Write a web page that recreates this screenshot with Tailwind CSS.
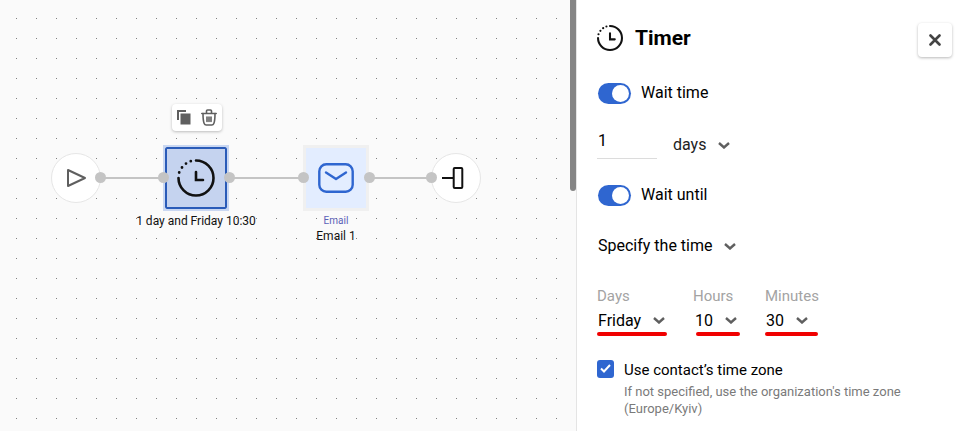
<!DOCTYPE html>
<html lang="en">
<head>
    <meta charset="UTF-8">
    <meta name="viewport" content="width=device-width, initial-scale=1.0">
    <title>Timer</title>
    <script src="https://cdn.jsdelivr.net/npm/@tailwindcss/browser@4"></script>
</head>
<body class="font-['Roboto',sans-serif] bg-white text-black overflow-hidden">
<div class="flex w-[962px] h-[431px]">

    <!-- canvas -->
    <div class="relative w-[570px] h-full shrink-0 bg-[#fafafa] bg-[radial-gradient(circle_at_0.5px_0.5px,#808080_0.5px,transparent_0.6px)] bg-size-[20px_20px] bg-position-[16px_18px]">
        <div class="absolute left-[101px] top-[177px] w-[330px] h-[2px] bg-[#c4c4c4]"></div>

        <!-- start -->
        <div class="absolute left-[51px] top-[153px] w-[50px] h-[50px] rounded-full bg-white border border-[#e6e6e6] flex items-center justify-center">
            <svg width="22" height="22" viewBox="0 0 22 22" fill="none" stroke="#5f5f5f" stroke-width="2" stroke-linejoin="round"><path d="M3 3v16L20 11z"/></svg>
        </div>

        <!-- timer node -->
        <div class="absolute left-[163px] top-[145px] w-[66px] h-[66px] border-2 border-[#c9d7f2] flex items-center justify-center">
            <div class="w-[62px] h-[62px] bg-[#c5d3ef] border-[2px] border-[#2a5bb8] rounded-[2px] flex items-center justify-center">
                <svg width="38" height="38" viewBox="0 0 38 38" fill="none" stroke="#111" stroke-width="2.600" stroke-linecap="round">
                    <path d="M19 1.500A17.500 17.500 0 1 1 1.500 19"/>
                    <path d="M2.200 13.500v.01M5 8.500v.01M9 4.600v.01M13.800 2.200v.01" stroke-width="2.800"/>
                    <path d="M19 13v8h7"/>
                </svg>
            </div>
        </div>

        <!-- email node -->
        <div class="absolute left-[303px] top-[145px] w-[66px] h-[66px] bg-[#e3edff] border-[3px] border-[#f0f0f0] flex items-center justify-center">
            <svg width="36" height="30" viewBox="0 0 36 30" fill="none" stroke="#2f66d0" stroke-width="2.400" stroke-linecap="round" stroke-linejoin="round">
                <rect x="1.300" y="1.300" width="33.400" height="27.400" rx="7"/>
                <path d="M8 9.500l10 6.500 10-6.500"/>
            </svg>
        </div>

        <!-- end -->
        <div class="absolute left-[431px] top-[153px] w-[50px] h-[50px] rounded-full bg-white border border-[#e6e6e6] flex items-center justify-center">
            <svg class="overflow-visible" width="24" height="24" viewBox="0 0 24 24" fill="none" stroke="#111" stroke-width="2" stroke-linejoin="round"><path d="M-2 12H10"/><rect x="9.700" y="2" width="8.600" height="20" rx="1"/></svg>
        </div>

        <!-- ports -->
        <div class="absolute left-[95px] top-[172px] w-[11px] h-[11px] rounded-full bg-[#c4c4c4]"></div>
        <div class="absolute left-[158px] top-[172px] w-[11px] h-[11px] rounded-full bg-[#c4c4c4]"></div>
        <div class="absolute left-[224px] top-[172px] w-[11px] h-[11px] rounded-full bg-[#c4c4c4]"></div>
        <div class="absolute left-[298px] top-[172px] w-[11px] h-[11px] rounded-full bg-[#c4c4c4]"></div>
        <div class="absolute left-[364px] top-[172px] w-[11px] h-[11px] rounded-full bg-[#c4c4c4]"></div>
        <div class="absolute left-[426px] top-[172px] w-[11px] h-[11px] rounded-full bg-[#c4c4c4]"></div>

        <!-- node toolbar -->
        <div class="absolute left-[172px] top-[104px] w-[50px] h-[27px] bg-white rounded-[4px] shadow-[0_1px_3px_rgba(0,0,0,0.25)] flex items-center justify-center gap-[10px]">
            <svg width="14" height="15" viewBox="0 0 14 15"><path d="M0 0h9v2H2v8H0z" fill="#5f5f5f"/><rect x="3.500" y="3.500" width="10" height="11" fill="#5f5f5f"/></svg>
            <svg width="16" height="17" viewBox="0 0 16 17" fill="none" stroke="#5f5f5f" stroke-width="1.600" stroke-linecap="round"><path d="M.8 4.500h14.400M5.500 4V2a1 1 0 0 1 1-1h3a1 1 0 0 1 1 1v2"/><path d="M2 4.500c0 5 .3 8 1.200 10 .3.8 1 1.500 2 1.500h5.600c1 0 1.700-.7 2-1.500.9-2 1.200-5 1.200-10"/><path d="M6 8v4.500M8 8v4.500M10 8v4.500"/></svg>
        </div>

        <!-- labels -->
        <div class="absolute left-[126px] top-[213px] w-[140px] text-center text-[12px] leading-[16px] text-[#111] whitespace-nowrap">1 day and Friday 10:30</div>
        <div class="absolute left-[296px] top-[214px] w-[80px] text-center text-[10px] leading-[13px] text-[#5a62b8]">Email</div>
        <div class="absolute left-[296px] top-[228px] w-[80px] text-center text-[12px] leading-[16px] text-[#111]">Email 1</div>
    </div>

    <!-- scrollbar -->
    <div class="w-[6px] shrink-0 bg-[#fafafa]">
        <div class="h-[191px] bg-[#858585] rounded-b-[3px]"></div>
    </div>

    <!-- side panel -->
    <div class="flex-1 border-l border-[#e4e4e4] pl-[20px] pr-[9px]">
        <div class="flex items-start justify-between h-[57px] pt-[23px] pr-[1px]">
            <div class="flex items-center gap-[12px] h-[30px]">
                <svg width="26" height="26" viewBox="0 0 38 38" fill="none" stroke="#111" stroke-width="3" stroke-linecap="round">
                    <path d="M19 1.500A17.500 17.500 0 1 1 1.500 19"/>
                    <path d="M2.200 13.500v.01M5 8.500v.01M9 4.600v.01M13.800 2.200v.01" stroke-width="3.200"/>
                    <path d="M19 12v9h7"/>
                </svg>
                <span class="text-[21px] leading-[30px] font-bold">Timer</span>
            </div>
            <div class="w-[34px] h-[34px] rounded-[4px] bg-white shadow-[0_1px_3px_rgba(0,0,0,0.28)] flex items-center justify-center">
                <svg width="12" height="12" viewBox="0 0 12 12" stroke="#444" stroke-width="2.600" stroke-linecap="round"><path d="M1.500 1.500l9 9M10.500 1.500l-9 9"/></svg>
            </div>
        </div>

        <div class="flex items-center gap-[10px] ml-[1px] mt-[26px] h-[20px]">
            <div class="w-[33px] h-[21px] rounded-full bg-[#2f66d0] flex items-center justify-end pr-[2px]"><div class="w-[17px] h-[17px] rounded-full bg-white"></div></div>
            <span class="text-[16px]">Wait time</span>
        </div>

        <div class="flex mt-[24px] h-[32px]">
            <div class="w-[60px] h-[32px] border-b border-[#dcdcdc] text-[16px] leading-[28px] pl-[1px]">1</div>
            <div class="flex items-center h-[28px] ml-[16px] mt-[4px] text-[16px] text-[#222]">
                days
                <svg class="ml-[12px]" width="12" height="7" viewBox="0 0 12 7" fill="none" stroke="#5f5f5f" stroke-width="2.400"><path d="M1 1l5 4.500L11 1"/></svg>
            </div>
        </div>

        <div class="flex items-center gap-[10px] ml-[1px] mt-[26px] h-[20px]">
            <div class="w-[33px] h-[21px] rounded-full bg-[#2f66d0] flex items-center justify-end pr-[2px]"><div class="w-[17px] h-[17px] rounded-full bg-white"></div></div>
            <span class="text-[16px]">Wait until</span>
        </div>

        <div class="flex items-center ml-[1px] mt-[31px] h-[20px] text-[16px]">
            Specify the time
            <svg class="ml-[12px]" width="12" height="7" viewBox="0 0 12 7" fill="none" stroke="#5f5f5f" stroke-width="2.400"><path d="M1 1l5 4.500L11 1"/></svg>
        </div>

        <div class="flex mt-[30px] text-[16px] leading-[20px]">
            <div class="w-[96px]">
                <div class="text-[#a3a3a3] text-[15px]">Days</div>
                <div class="flex items-center w-[70px] h-[26px] pl-[1px] pt-[3px] justify-between pr-[2px]">Friday
                    <svg width="12" height="7" viewBox="0 0 12 7" fill="none" stroke="#5f5f5f" stroke-width="2.400"><path d="M1 1l5 4.500L11 1"/></svg>
                </div>
                <div class="w-[70px] h-[3.500px] rounded-full bg-[#f00000]"></div>
            </div>
            <div class="w-[72px]">
                <div class="text-[#a3a3a3] text-[15px]">Hours</div>
                <div class="flex items-center w-[47px] h-[26px] pl-[2px] pt-[3px] justify-between pr-[3px]">10
                    <svg width="12" height="7" viewBox="0 0 12 7" fill="none" stroke="#5f5f5f" stroke-width="2.400"><path d="M1 1l5 4.500L11 1"/></svg>
                </div>
                <div class="w-[44px] h-[3.500px] ml-[3px] rounded-full bg-[#f00000]"></div>
            </div>
            <div class="w-[54px]">
                <div class="text-[#a3a3a3] text-[15px]">Minutes</div>
                <div class="flex items-center w-[53px] h-[26px] pl-[1px] pt-[3px] gap-[12px]">30
                    <svg width="12" height="7" viewBox="0 0 12 7" fill="none" stroke="#5f5f5f" stroke-width="2.400"><path d="M1 1l5 4.500L11 1"/></svg>
                </div>
                <div class="w-[53px] h-[3.500px] rounded-full bg-[#f00000]"></div>
            </div>
        </div>

        <div class="flex mt-[24px] gap-[10px]">
            <div class="w-[17px] h-[18px] rounded-[3px] bg-[#2f66d0] flex items-center justify-center shrink-0">
                <svg width="11" height="9" viewBox="0 0 11 9" fill="none" stroke="#fff" stroke-width="2"><path d="M1 4.500l3 3L10 1"/></svg>
            </div>
            <div>
                <div class="text-[15px] leading-[20px]">Use contact’s time zone</div>
                <div class="text-[13px] leading-[17px] text-[#7a7a7a] mt-[3px]">If not specified, use the organization's time zone<br>(Europe/Kyiv)</div>
            </div>
        </div>
    </div>
</div>
</body>
</html>
